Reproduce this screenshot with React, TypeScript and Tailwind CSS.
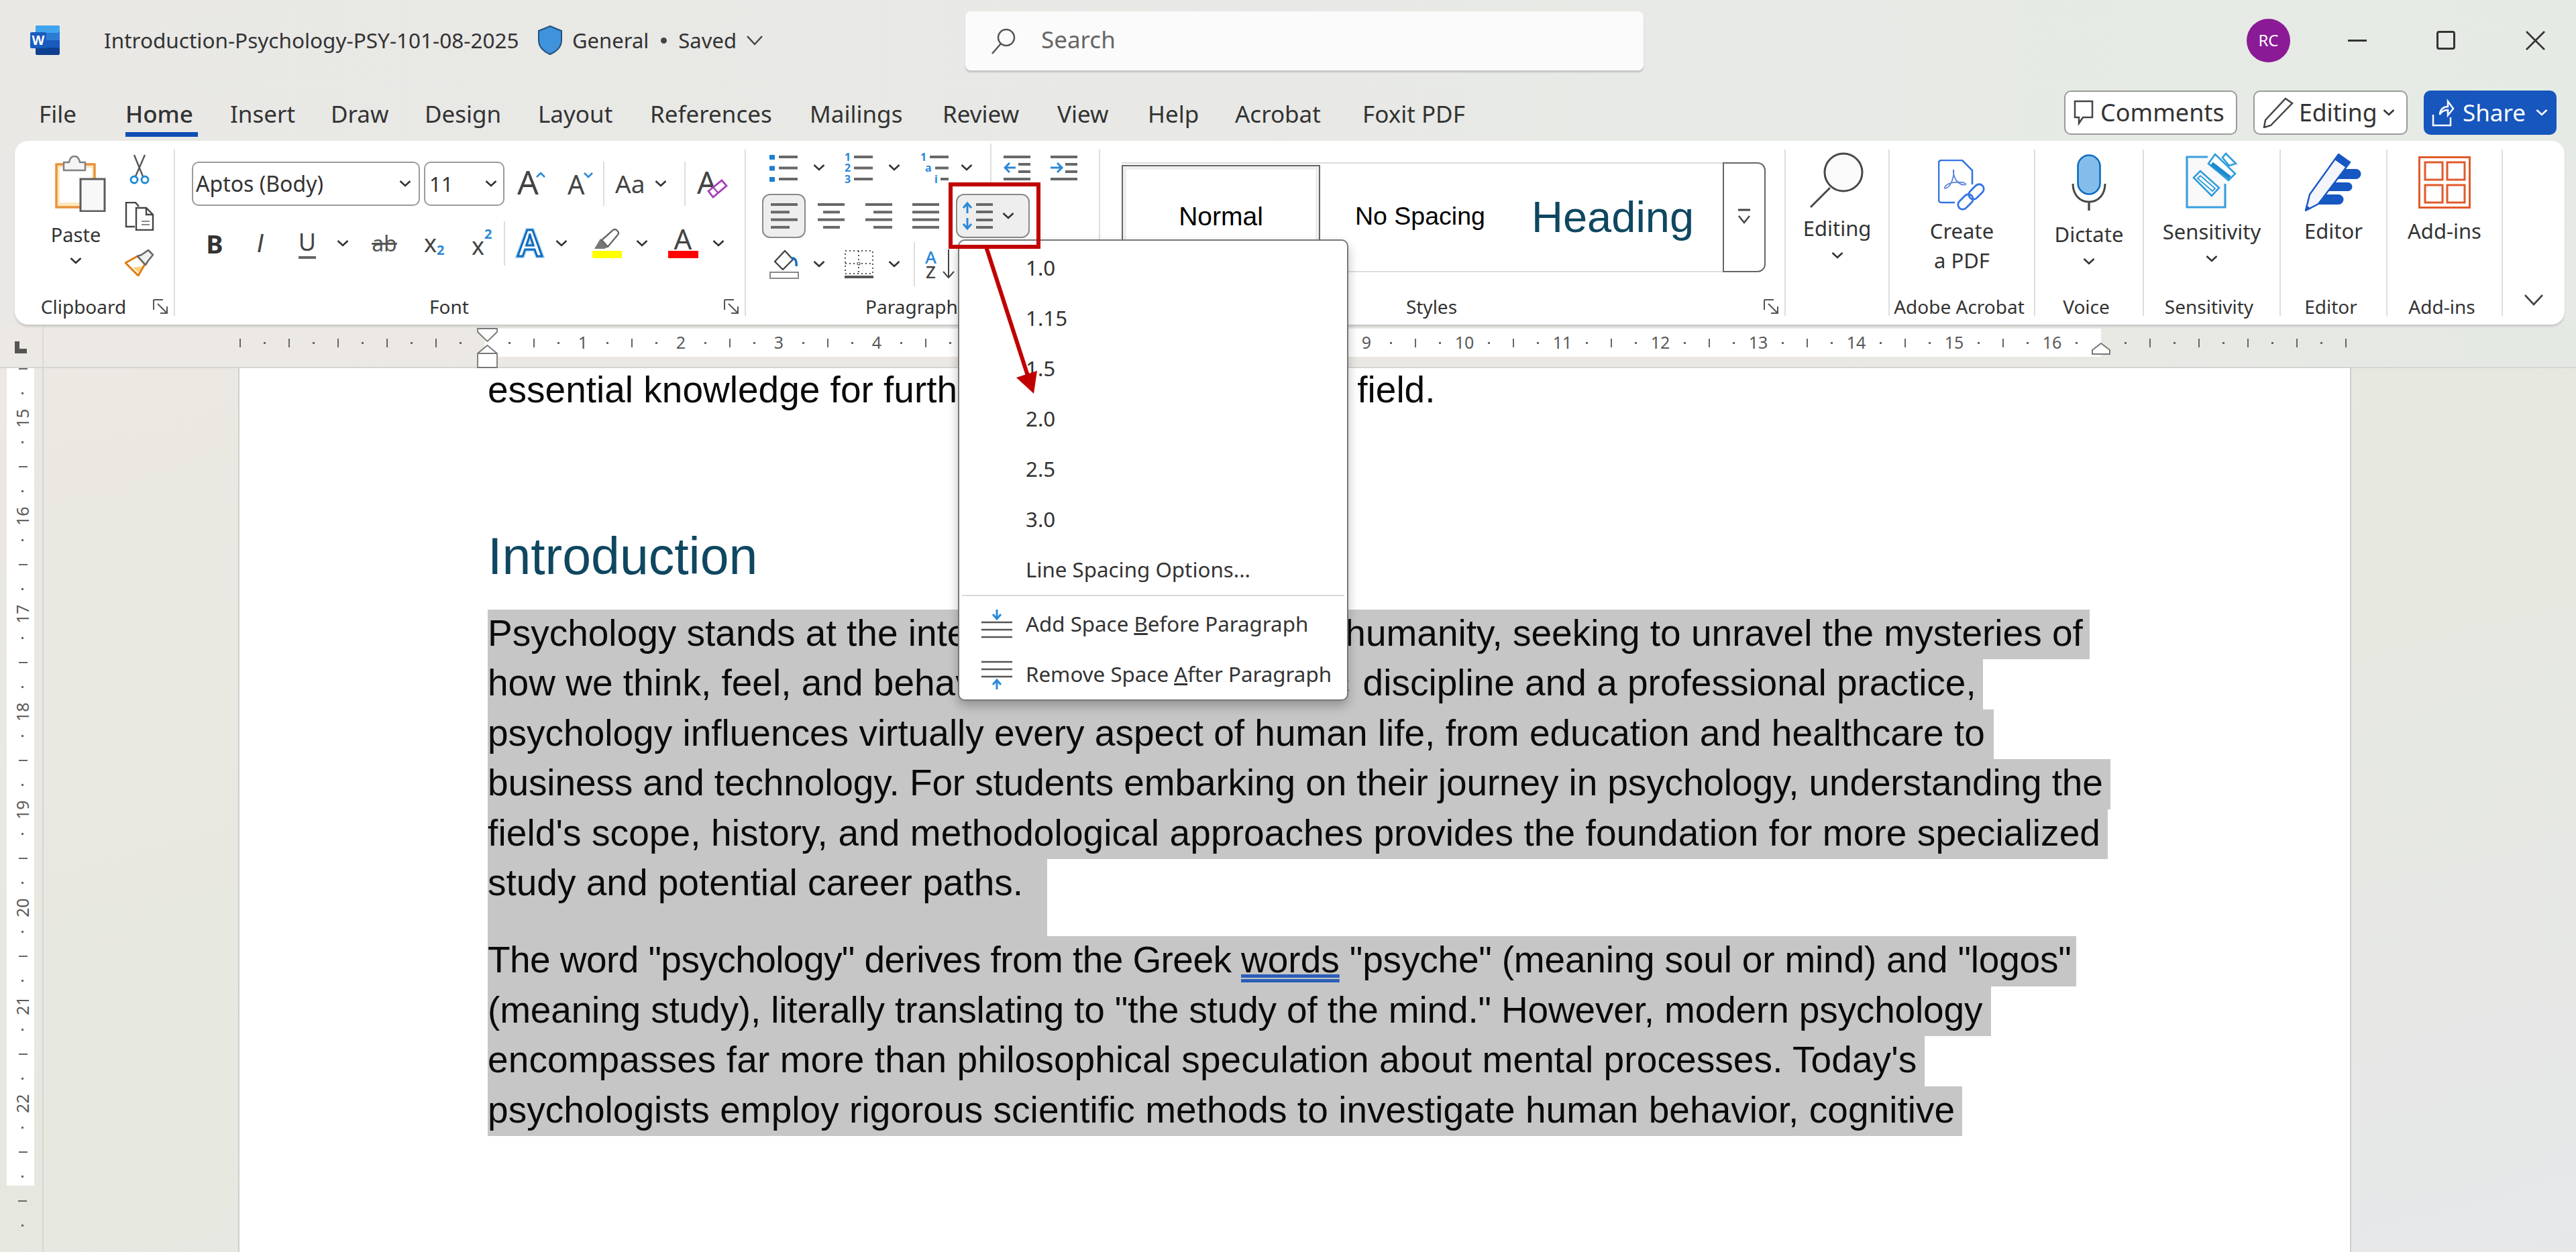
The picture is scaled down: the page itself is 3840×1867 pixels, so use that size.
import type { ReactNode } from "react"

const ui = "font-['Noto_Sans','Open_Sans',sans-serif]"
const doc = "font-['Liberation_Sans',Arial,sans-serif]"

function Chev({ className = "" }: { className?: string }) {
  return (
    <svg viewBox="0 0 20 14" className={`w-[20px] h-[14px] shrink-0 ${className}`}>
      <path d="M2.5 3l7.5 7 7.5-7" fill="none" stroke="#333" strokeWidth="2.6" />
    </svg>
  )
}

function AlignIcon({ rows, className = "" }: { rows: [number, number][]; className?: string }) {
  return (
    <svg viewBox="0 0 42 46" className={`w-[42px] h-[46px] shrink-0 ${className}`}>
      {rows.map(([x, w], i) => (
        <rect key={i} x={x} y={4 + i * 11.3} width={w} height="4" fill="#686868" />
      ))}
    </svg>
  )
}

function WordIcon() {
  return (
    <svg viewBox="0 0 44 44" className="w-[44px] h-[44px] shrink-0 overflow-visible">
      <rect x="8" y="0" width="36" height="44" rx="3" fill="#185abd" />
      <rect x="8" y="0" width="36" height="11" rx="3" fill="#41a5ee" />
      <rect x="8" y="11" width="36" height="11" fill="#2b7cd3" />
      <rect x="8" y="33" width="36" height="11" rx="3" fill="#103f91" />
      <rect x="0" y="10" width="24" height="24" rx="2" fill="#1a5cbe" />
      <text x="12" y="29" textAnchor="middle" fontSize="20" fontWeight="700" fill="#fff" fontFamily="Liberation Sans">W</text>
    </svg>
  )
}

function Shield() {
  return (
    <svg viewBox="0 0 40 44" className="w-[40px] h-[44px] shrink-0">
      <path d="M20 1l17 7v14c0 10-8 17-17 21C11 39 3 32 3 22V8z" fill="#3f92dc" stroke="#24507c" strokeWidth="2" />
    </svg>
  )
}

function SearchGlyph() {
  return (
    <svg viewBox="0 0 40 40" className="w-[40px] h-[40px] shrink-0">
      <circle cx="25" cy="15" r="12" fill="none" stroke="#555" strokeWidth="2.5" />
      <path d="M17 24L4 39" stroke="#555" strokeWidth="2.5" />
    </svg>
  )
}

function PasteIcon() {
  return (
    <svg viewBox="0 0 76 84" className="w-[76px] h-[84px]">
      <rect x="2" y="13" width="57" height="64" fill="#fde8bd" stroke="#e9923a" strokeWidth="3.5" />
      <rect x="7" y="18" width="48" height="52" fill="#fff" />
      <path d="M13 10h8c1-6 4-9 8-9s7 3 8 9h8v12H13z" fill="#f5f5f5" stroke="#808080" strokeWidth="2.5" strokeLinejoin="round" />
      <rect x="38" y="35" width="36" height="48" fill="#f8f8f8" stroke="#5c5c5c" strokeWidth="3" />
    </svg>
  )
}

function ScissorsIcon() {
  return (
    <svg viewBox="0 0 31 45" className="w-[31px] h-[45px]">
      <path d="M7 1l13 32M23 1L9 33" stroke="#555" strokeWidth="2.4" fill="none" />
      <circle cx="7" cy="38" r="5" fill="#fff" stroke="#1b8ad6" strokeWidth="2.8" />
      <circle cx="23" cy="38" r="5" fill="#fff" stroke="#1b8ad6" strokeWidth="2.8" />
    </svg>
  )
}

function CopyIcon() {
  return (
    <svg viewBox="0 0 44 43" className="w-[44px] h-[43px]">
      <path d="M15 37H2V1h14l5 6" fill="none" stroke="#444" strokeWidth="2.4" />
      <path d="M17 9h15l10 10v23H17z" fill="#fff" stroke="#444" strokeWidth="2.4" />
      <path d="M32 9v10h10" fill="none" stroke="#444" strokeWidth="2.4" />
      <path d="M25 29h12M25 34h12" stroke="#888" strokeWidth="2" />
    </svg>
  )
}

function PainterIcon() {
  return (
    <svg viewBox="0 0 44 40" className="w-[44px] h-[40px]">
      <path d="M1 20l19 19 10-17-11-12z" fill="#fff" stroke="#e07b10" strokeWidth="3" strokeLinejoin="round" />
      <path d="M12 27l9 8 5-10z" fill="#fad27a" />
      <path d="M19 10l6-2 10-7 7 7-8 10-3 5z" fill="#f0f0f0" stroke="#666" strokeWidth="2.5" strokeLinejoin="round" />
    </svg>
  )
}

function GrowIcon() {
  return (
    <svg viewBox="0 0 45 44" className="w-[45px] h-[44px] shrink-0 overflow-visible">
      <text x="1" y="38" fontSize="50" fill="#444" fontFamily="Noto Sans">A</text>
      <path d="M30 12l6-6 6 6" fill="none" stroke="#2b88d8" strokeWidth="2.6" />
    </svg>
  )
}

function ShrinkIcon() {
  return (
    <svg viewBox="0 0 40 44" className="w-[40px] h-[44px] shrink-0 overflow-visible">
      <text x="1" y="38" fontSize="40" fill="#444" fontFamily="Noto Sans">A</text>
      <path d="M26 6l6 6 6-6" fill="none" stroke="#2b88d8" strokeWidth="2.6" />
    </svg>
  )
}

function ClearIcon() {
  return (
    <svg viewBox="0 0 44 46" className="w-[44px] h-[46px] shrink-0 overflow-visible">
      <text x="0" y="38" fontSize="46" fill="#444" fontFamily="Noto Sans">A</text>
      <path d="M17 34l20-16 7 8-20 17z" fill="#fff" stroke="#a43eb8" strokeWidth="2.8" />
      <path d="M24 28l7 8" stroke="#a43eb8" strokeWidth="2.4" />
    </svg>
  )
}

function ListIcon({ kind }: { kind: "bullet" | "number" | "multi" }) {
  const marks = kind === "number" ? ["1", "2", "3"] : ["1", "a", "i"]
  return (
    <svg viewBox="0 0 43 46" className="w-[43px] h-[46px] shrink-0 overflow-visible">
      {[0, 1, 2].map((i) =>
        kind === "bullet" ? (
          <rect key={i} x="0" y={4 + i * 16.5} width="8" height="7" fill="#1b7fd0" />
        ) : (
          <text key={i} x={kind === "multi" ? [0, 7, 21][i] : 0} y={12.5 + i * 16.5} fontSize="16" fontWeight="700" fill="#2b88d8" fontFamily="Noto Sans">
            {marks[i]}
          </text>
        )
      )}
      {[0, 1, 2].map((i) => {
        const x = kind === "multi" ? [14, 22, 30][i] : 14
        return <rect key={i} x={x} y={5 + i * 16.5} width={kind === "multi" ? 42 - x : 28} height="4" fill="#686868" />
      })}
    </svg>
  )
}

function IndentIcon({ grow }: { grow: boolean }) {
  return (
    <svg viewBox="0 0 40 46" className="w-[40px] h-[46px] shrink-0">
      <rect x="0" y="5" width="40" height="4" fill="#686868" />
      <rect x="22" y="16" width="18" height="4" fill="#686868" />
      <rect x="22" y="27" width="18" height="4" fill="#686868" />
      <rect x="0" y="38" width="40" height="4" fill="#686868" />
      <path d={grow ? "M0 23h16M10 16l7 7-7 7" : "M18 23H2M9 16l-7 7 7 7"} fill="none" stroke="#2b88d8" strokeWidth="3" />
    </svg>
  )
}

function LineSpacingIcon() {
  return (
    <svg viewBox="0 0 48 46" className="w-[48px] h-[46px] shrink-0">
      <path d="M7 19V5M1 11l6-7 6 7M7 26v15M1 35l6 7 6-7" fill="none" stroke="#2b88d8" strokeWidth="3" />
      <rect x="20" y="4" width="25" height="4" fill="#686868" />
      <rect x="20" y="15" width="25" height="4" fill="#686868" />
      <rect x="20" y="27" width="25" height="4" fill="#686868" />
      <rect x="20" y="38" width="25" height="4" fill="#686868" />
    </svg>
  )
}

function ShadingIcon() {
  return (
    <svg viewBox="0 0 44 44" className="w-[44px] h-[44px] shrink-0">
      <path d="M8 18L23 2l12 13-15 15z" fill="#fff" stroke="#444" strokeWidth="2.4" strokeLinejoin="round" />
      <path d="M33 14c4-3 8 2 7 11" fill="none" stroke="#1b6fc2" strokeWidth="3.5" />
      <rect x="1" y="34" width="42" height="9" fill="#fff" stroke="#888" strokeWidth="2" />
    </svg>
  )
}

function BordersIcon() {
  return (
    <svg viewBox="0 0 43 43" className="w-[43px] h-[43px] shrink-0">
      <path d="M1 1h41v34H1zM1 20h41M21 1v34" fill="none" stroke="#555" strokeWidth="2" strokeDasharray="2 4" />
      <circle cx="21" cy="20" r="2" fill="#fff" stroke="#555" strokeWidth="1.2" />
      <rect x="0" y="38" width="43" height="4" fill="#555" />
    </svg>
  )
}

function SortIcon() {
  return (
    <div className="flex items-center w-[47px] shrink-0">
      <div className={`${ui} flex flex-col items-center leading-[22px] text-[26px]`}>
        <span className="text-[#2b88d8] font-medium">A</span>
        <span className="text-[#444] font-medium">Z</span>
      </div>
      <svg viewBox="0 0 20 44" className="ml-[8px] w-[20px] h-[44px]">
        <path d="M10 0v42M2 33l8 9 8-9" fill="none" stroke="#444" strokeWidth="2" />
      </svg>
    </div>
  )
}

function HighlightIcon() {
  return (
    <svg viewBox="0 0 44 44" className="w-[44px] h-[44px] shrink-0">
      <path d="M3 30l9-15 12 12-6 3z" fill="#777" />
      <path d="M14 17L31 2a3.5 3.5 0 015 0l2 2a3.5 3.5 0 010 5L23 27z" fill="#fff" stroke="#666" strokeWidth="2.4" />
      <rect x="0" y="33" width="44" height="11" fill="#ffff00" />
    </svg>
  )
}

function FontColorIcon() {
  return (
    <svg viewBox="0 0 45 44" className="w-[45px] h-[44px] shrink-0 overflow-visible">
      <text x="22" y="31" textAnchor="middle" fontSize="42" fill="#444" fontFamily="Noto Sans">A</text>
      <rect x="0" y="33" width="45" height="11" fill="#ff0000" />
    </svg>
  )
}

function TextEffectsIcon() {
  return (
    <svg viewBox="0 0 44 44" className="w-[44px] h-[44px] shrink-0 overflow-visible">
      <text x="22" y="41" textAnchor="middle" fontSize="54" fontWeight="600" fill="none" stroke="#a9d2f2" strokeWidth="6" fontFamily="Noto Sans">A</text>
      <text x="22" y="41" textAnchor="middle" fontSize="54" fontWeight="600" fill="#fff" stroke="#0f6cbd" strokeWidth="3" fontFamily="Noto Sans">A</text>
    </svg>
  )
}

function Launcher() {
  return (
    <svg viewBox="0 0 24 24" className="w-[24px] h-[24px] shrink-0">
      <path d="M2 2h14M2 2v15" stroke="#555" strokeWidth="2" fill="none" />
      <path d="M8 8l14 14M22 12v10H12" stroke="#555" strokeWidth="2" fill="none" />
    </svg>
  )
}

function MagnifierIcon() {
  return (
    <svg viewBox="0 0 85 85" className="w-[85px] h-[85px]">
      <circle cx="52" cy="31" r="28" fill="#fafafa" stroke="#484848" strokeWidth="3" />
      <path d="M32 54L3 83" stroke="#484848" strokeWidth="3" />
    </svg>
  )
}

function PdfIcon() {
  return (
    <svg viewBox="0 0 72 78" className="w-[72px] h-[78px]">
      <path d="M25 64H5a4 4 0 01-4-4V5a4 4 0 014-4h31l15 15v21" fill="#fff" stroke="#3574e2" strokeWidth="2.6" />
      <path d="M23 15c2 10-4 26-12 28-3 0 0-6 8-8 8-2 20-2 22 1 1 3-8 2-12-3-4-4-7-12-6-18z" fill="none" stroke="#5a84d8" strokeWidth="1.8" />
      <rect x="28" y="56" width="26" height="14" rx="7" transform="rotate(-45 41 63)" fill="#fff" stroke="#3574e2" strokeWidth="2.8" />
      <rect x="44" y="41" width="26" height="14" rx="7" transform="rotate(-45 57 48)" fill="none" stroke="#3574e2" strokeWidth="2.8" />
    </svg>
  )
}

function MicIcon() {
  return (
    <svg viewBox="0 0 52 84" className="w-[52px] h-[84px]">
      <path d="M2 44c0 16 10 27 24 27s24-11 24-27" fill="none" stroke="#484848" strokeWidth="3" />
      <path d="M26 71v13" stroke="#484848" strokeWidth="3.4" />
      <rect x="9.5" y="1.5" width="33" height="58" rx="16.5" fill="#84bdec" stroke="#0f6cbd" strokeWidth="2.6" />
    </svg>
  )
}

function SensitivityIcon() {
  return (
    <svg viewBox="0 0 78 84" className="w-[78px] h-[84px]">
      <path d="M33 7H2v75h57V47" fill="#f9f9f9" stroke="#3ba0de" strokeWidth="3.2" />
      <path d="M12 38l10-10 28 25-11 12z" fill="#fff" stroke="#2f9cdc" strokeWidth="2.6" />
      <path d="M18 39l4-4 22 19-4 4z" fill="none" stroke="#2f9cdc" strokeWidth="2" />
      <path d="M60 2l15 15-10 3-10-12z" fill="#fff" stroke="#2f9cdc" strokeWidth="2.6" />
      <path d="M44 3l30 29-10 10-30-25z" fill="#fff" stroke="#2f9cdc" strokeWidth="2.6" />
      <path d="M39 17l27 21" stroke="#1f8ad0" strokeWidth="6" />
    </svg>
  )
}

function EditorIcon() {
  return (
    <svg viewBox="0 0 86 86" className="w-[86px] h-[86px]">
      <path d="M50 23H76a7.5 7.5 0 010 15H40zM35 43H64a6.5 6.5 0 010 13H26zM22 61H50a7.5 7.5 0 010 15H10z" fill="#1657c2" />
      <path d="M1 85l6-24L50 1l17 12-47 62z" fill="#f4f5fb" stroke="#1657c2" strokeWidth="2.4" />
      <path d="M50 1l17 12-6 8-17-12z" fill="#1657c2" />
      <path d="M0 86l2-9 7 5z" fill="#1657c2" />
    </svg>
  )
}

function AddinsIcon() {
  return (
    <svg viewBox="0 0 78 78" className="w-[78px] h-[78px]">
      <rect x="1.5" y="1.5" width="75" height="75" fill="#fff" stroke="#e05a2b" strokeWidth="3" />
      {[10, 43].map((x) =>
        [9, 43].map((y) => <rect key={`${x}${y}`} x={x} y={y} width="26" height="26" fill="#fff" stroke="#e05a2b" strokeWidth="3" />)
      )}
    </svg>
  )
}

function Sep({ className = "" }: { className?: string }) {
  return <div className={`w-[2px] shrink-0 bg-[#dedede] ${className}`} />
}

function GroupLabel({ label, launcher = true }: { label: string; launcher?: boolean }) {
  return (
    <div className="h-[54px] mt-auto flex items-center pr-[8px]">
      <span className={`${ui} flex-1 text-center text-[28px] text-[#333] whitespace-nowrap`}>{label}</span>
      {launcher && <Launcher />}
    </div>
  )
}

function BigButton({ icon, label, pt, mt, chevMt }: { icon: ReactNode; label: ReactNode; pt: string; mt: string; chevMt?: string }) {
  return (
    <div className={`w-full shrink-0 flex flex-col items-center ${pt}`}>
      {icon}
      <div className={`${ui} ${mt} text-[31px] leading-[44px] text-center text-[#333]`}>{label}</div>
      {chevMt && <Chev className={chevMt} />}
    </div>
  )
}

const tabs = [
  { name: "File", cls: "w-[129px] border-transparent" },
  { name: "Home", cls: "w-[108px] mr-[48px] border-[#0f4eb3] font-medium" },
  { name: "Insert", cls: "w-[150px] border-transparent" },
  { name: "Draw", cls: "w-[140px] border-transparent" },
  { name: "Design", cls: "w-[169px] border-transparent" },
  { name: "Layout", cls: "w-[167px] border-transparent" },
  { name: "References", cls: "w-[238px] border-transparent" },
  { name: "Mailings", cls: "w-[198px] border-transparent" },
  { name: "Review", cls: "w-[171px] border-transparent" },
  { name: "View", cls: "w-[135px] border-transparent" },
  { name: "Help", cls: "w-[130px] border-transparent" },
  { name: "Acrobat", cls: "w-[190px] border-transparent" },
  { name: "Foxit PDF", cls: "w-[170px] border-transparent" },
]

const menuItems = ["1.0", "1.15", "1.5", "2.0", "2.5", "3.0", "Line Spacing Options..."]

const para = [
  { k: "a", w: "w-[2388px]", t: <>Psychology stands at the inte<span className="tracking-[-0.65px]">rsection of science and</span> humanity, seeking to unravel the mysteries of</> },
  { k: "b", w: "w-[2229px]", t: <>how we think, feel, and behave. As both <span className="tracking-[4px]">a scientific</span> discipline and a professional practice,</> },
  { k: "c", w: "w-[2245px]", t: <>psychology influences virtually every aspect of human life, from education and healthcare to</> },
  { k: "d", w: "w-[2419px] tracking-[-0.12px]", t: <>business and technology. For students embarking on their journey in psychology, understanding the</> },
  { k: "e", w: "w-[2415px] tracking-[0.1px]", t: <>field's scope, history, and methodological approaches provides the foundation for more specialized</> },
  { k: "f", w: "w-[834px] h-[115px]", t: <>study and potential career paths.</> },
  { k: "g", w: "w-[2368px]", t: <><span className="tracking-[-0.57px]">The word "psychology" derives from the Greek </span><span className="underline decoration-double decoration-[#2b5fb8]">words</span><span className="tracking-[-0.19px]"> "psyche" (meaning soul or mind) and "logos"</span></> },
  { k: "h", w: "w-[2241px] tracking-[-0.16px]", t: <>(meaning study), literally translating to "the study of the mind." However, modern psychology</> },
  { k: "i", w: "w-[2142px] tracking-[0.1px]", t: <>encompasses far more than philosophical speculation about mental processes. Today's</> },
  { k: "j", w: "w-[2198px] tracking-[0.05px]", t: <>psychologists employ rigorous scientific methods to investigate human behavior, cognitive</> },
]

const docText = `${doc} leading-[71px] text-[55px] text-[#0a0a0a] whitespace-nowrap`

function hTick(k: number) {
  if (k > 0 && k <= 64 && k % 4 === 0) {
    return <span className={`${ui} text-[25px] text-[#5a5a5a]`}>{k / 4}</span>
  }
  if (k % 2 === 0) return <span className="w-[2px] h-[13px] bg-[#666]" />
  return <span className="w-[3px] h-[3px] bg-[#666]" />
}

function HTicks({ from, to }: { from: number; to: number }) {
  const items = []
  for (let k = from; k <= to; k++) {
    items.push(
      <div key={k} className="w-[36.5px] shrink-0 flex items-center justify-center">
        {hTick(k)}
      </div>
    )
  }
  return <>{items}</>
}

function VRuler() {
  const nums = [15, 16, 17, 18, 19, 20, 21, 22, 23]
  const line = <span className="w-[13px] h-[2px] bg-[#666]" />
  const dot = <span className="w-[3px] h-[3px] bg-[#666]" />
  return (
    <div className="w-[65px] shrink-0 relative overflow-hidden border-r-2 border-[#d6d6d6] pl-[10px]">
      <div className="w-[41px] h-[1219px] bg-white" />
      <div className="absolute left-[10px] top-[-17px] w-[41px] flex flex-col items-center">
        {nums.map((n) => (
          <div key={n} className="h-[146px] w-full flex flex-col items-center">
            <div className="h-[36.5px] flex items-center pl-[7px]">{line}</div>
            <div className="h-[36.5px] flex items-center pl-[5px]">{dot}</div>
            <div className="h-[36.5px] flex items-center pl-[5px]">
              {n < 23 ? <span className={`${ui} -rotate-90 text-[25px] text-[#5a5a5a]`}>{n}</span> : line}
            </div>
            <div className="h-[36.5px] flex items-center pl-[5px]">{dot}</div>
          </div>
        ))}
      </div>
    </div>
  )
}

export default function App() {
  return (
    <div className="relative w-[3840px] h-[1867px] overflow-hidden flex flex-col bg-[linear-gradient(90deg,#e9e8e5_0%,#e8e9e6_50%,#e5ebe4_100%)]">
      {/* title bar */}
      <div className="h-[120px] shrink-0 flex items-center">
        <div className="ml-[45px]"><WordIcon /></div>
        <span className={`${ui} ml-[66px] w-[645px] text-[31.5px] text-[#333] whitespace-nowrap`}>Introduction-Psychology-PSY-101-08-2025</span>
        <Shield />
        <span className={`${ui} ml-[13px] text-[31px] text-[#333]`}>General</span>
        <span className="ml-[18px] w-[9px] h-[9px] rounded-full bg-[#444]" />
        <span className={`${ui} ml-[17px] text-[31px] text-[#333]`}>Saved</span>
        <svg viewBox="0 0 26 16" className="ml-[14px] w-[26px] h-[16px]"><path d="M2 2l11 12L24 2" fill="none" stroke="#444" strokeWidth="2.5" /></svg>
        <div className="absolute left-[1439px] top-[17px] w-[1011px] h-[88px] rounded-[8px] bg-[#fbfbfb] shadow-[0_3px_2px_#c4c4c4] flex items-center pl-[36px]">
          <SearchGlyph />
          <span className={`${ui} ml-[37px] mb-[4px] text-[35px] text-[#666]`}>Search</span>
        </div>
        <div className="ml-auto flex items-center mr-[46px]">
          <div className={`${ui} w-[65px] h-[65px] rounded-full bg-[#8a1a96] text-white text-[24px] flex items-center justify-center`}>RC</div>
          <span className="ml-[86px] w-[28px] h-[3px] bg-[#333]" />
          <span className="ml-[104px] w-[28px] h-[28px] rounded-[4px] border-[3px] border-[#333]" />
          <svg viewBox="0 0 29 29" className="ml-[105px] w-[29px] h-[29px]"><path d="M1 1l27 27M28 1L1 28" stroke="#333" strokeWidth="2.6" /></svg>
        </div>
      </div>

      {/* tabs */}
      <div className="h-[90px] shrink-0 flex items-start">
        <div className="ml-[58px] mt-[18px] flex items-start">
          {tabs.map((t) => (
            <div key={t.name} className={`${ui} h-[66px] pt-[5px] flex items-center justify-start border-b-[7px] text-[35px] text-[#333] whitespace-nowrap ${t.cls}`}>
              {t.name}
            </div>
          ))}
        </div>
        <div className="ml-auto mr-[29px] mt-[15px] flex items-center gap-[24px]">
          <div className={`${ui} w-[258px] h-[66px] rounded-[10px] border-2 border-[#9a9a9a] bg-white flex items-center pl-[12px] text-[36px] text-[#333]`}>
            <svg viewBox="0 0 30 38" className="w-[30px] h-[38px]"><path d="M2 2h26v24H14l-6 9v-9H2z" fill="none" stroke="#444" strokeWidth="2.5" /></svg>
            <span className="ml-[10px]">Comments</span>
          </div>
          <div className={`${ui} w-[230px] h-[66px] rounded-[10px] border-2 border-[#9a9a9a] bg-white flex items-center pl-[12px] text-[35.5px] text-[#333]`}>
            <svg viewBox="0 0 46 46" className="w-[46px] h-[46px]"><path d="M34 2l10 7L12 42 2 45l2-11z" fill="none" stroke="#444" strokeWidth="2.5" /></svg>
            <span className="ml-[8px]">Editing</span>
            <Chev className="ml-[8px]" />
          </div>
          <div className={`${ui} w-[198px] h-[66px] rounded-[10px] bg-[#1656bd] flex items-center pl-[12px] text-[35px] text-white`}>
            <svg viewBox="0 0 34 42" className="w-[34px] h-[42px]"><path d="M2 24v16h26V28M12 24c0-8 6-12 12-12V4l8 11-8 10v-8c-6 0-10 3-12 7z" fill="none" stroke="#fff" strokeWidth="2.5" /></svg>
            <span className="ml-[12px]">Share</span>
            <svg viewBox="0 0 20 14" className="ml-[14px] w-[20px] h-[14px]"><path d="M2.5 3l7.5 7 7.5-7" fill="none" stroke="#fff" strokeWidth="2.6" /></svg>
          </div>
        </div>
      </div>

      {/* ribbon */}
      <div className="ml-[22px] w-[3801px] h-[274px] shrink-0 rounded-[20px] bg-white shadow-[0_3px_3px_#c9c9c9] flex relative z-10">
        {/* clipboard */}
        <div className="w-[237px] shrink-0 flex flex-col pt-[22px]">
          <div className="flex">
            <div className="ml-[60px] w-[76px] flex flex-col items-center">
              <PasteIcon />
              <span className={`${ui} mt-[14px] mr-[14px] text-[29px] leading-[40px] text-[#333]`}>Paste</span>
              <Chev className="mt-[12px] mr-[14px]" />
            </div>
            <div className="ml-[28px] -mt-[2px] w-[44px] flex flex-col items-center">
              <ScissorsIcon />
              <div className="mt-[26px]"><CopyIcon /></div>
              <div className="mt-[28px]"><PainterIcon /></div>
            </div>
          </div>
          <GroupLabel label="Clipboard" />
        </div>
        <Sep className="my-[13px]" />

        {/* font */}
        <div className="w-[849px] shrink-0 flex flex-col pt-[31px]">
          <div className="flex items-center h-[66px]">
            <div className={`${ui} ml-[25px] w-[340px] h-[66px] rounded-[10px] border-2 border-[#9b9b9b] flex items-center justify-between pl-[4px] pr-[10px] text-[32px] text-[#333]`}>
              Aptos (Body)<Chev />
            </div>
            <div className={`${ui} ml-[6px] w-[120px] h-[66px] rounded-[10px] border-2 border-[#9b9b9b] flex items-center justify-between pl-[6px] pr-[8px] text-[31px] text-[#333]`}>
              11<Chev />
            </div>
            <div className="ml-[18px]"><GrowIcon /></div>
            <div className="ml-[30px]"><ShrinkIcon /></div>
            <Sep className="ml-[14px] h-[66px]" />
            <span className={`${ui} ml-[16px] w-[54px] text-[37px] text-[#444]`}>Aa</span>
            <Chev className="ml-[4px]" />
            <Sep className="ml-[25px] h-[66px]" />
            <div className="ml-[17px]"><ClearIcon /></div>
          </div>
          <div className="flex items-center h-[66px] mt-[23px]">
            <span className={`${ui} ml-[39px] w-[40px] text-center text-[38px] font-bold text-[#333]`}>B</span>
            <span className={`${doc} ml-[28px] w-[40px] text-center text-[38px] italic text-[#444]`}>I</span>
            <div className="ml-[30px] w-[40px] flex flex-col items-center">
              <span className={`${ui} text-[36px] leading-[42px] text-[#444]`}>U</span>
              <span className="w-[26px] h-[4px] bg-[#666]" />
            </div>
            <Chev className="ml-[23px]" />
            <span className={`${ui} ml-[30px] w-[44px] text-center text-[32px] text-[#555] line-through`}>ab</span>
            <div className="ml-[37px] w-[43px] flex items-end">
              <span className={`${ui} text-[36px] leading-[42px] text-[#444]`}>x</span>
              <span className={`${ui} text-[20px] leading-[22px] font-bold text-[#2b88d8]`}>2</span>
            </div>
            <div className="ml-[28px] w-[34px] flex items-start">
              <span className={`${ui} text-[36px] leading-[42px] text-[#444] mt-[8px]`}>x</span>
              <span className={`${ui} text-[20px] leading-[22px] font-bold text-[#2b88d8]`}>2</span>
            </div>
            <Sep className="ml-[14px] h-[66px]" />
            <div className="ml-[15px]"><TextEffectsIcon /></div>
            <Chev className="ml-[15px]" />
            <div className="ml-[36px]"><HighlightIcon /></div>
            <Chev className="ml-[20px]" />
            <div className="ml-[29px]"><FontColorIcon /></div>
            <Chev className="ml-[20px]" />
          </div>
          <GroupLabel label="Font" />
        </div>
        <Sep className="my-[13px]" />

        {/* paragraph */}
        <div className="w-[526px] shrink-0 flex flex-col pt-[4px]">
          <div className="h-[72px] flex items-center">
            <div className="ml-[35px]"><ListIcon kind="bullet" /></div>
            <Chev className="ml-[21px]" />
            <div className="ml-[28px]"><ListIcon kind="number" /></div>
            <Chev className="ml-[21px]" />
            <div className="ml-[29px]"><ListIcon kind="multi" /></div>
            <Chev className="ml-[16px]" />
            <Sep className="ml-[25px] h-[63px] -mt-[9px]" />
            <div className="ml-[18px]"><IndentIcon grow={false} /></div>
            <div className="ml-[30px]"><IndentIcon grow /></div>
          </div>
          <div className="h-[72px] flex items-center">
            <div className="ml-[24px] w-[65px] h-[66px] rounded-[12px] border-2 border-[#8a8a8a] bg-[#eeeeee] flex items-center justify-center">
              <AlignIcon rows={[[1, 40], [1, 28], [1, 40], [1, 28]]} />
            </div>
            <AlignIcon className="ml-[18px]" rows={[[0, 40], [8, 25], [0, 40], [8, 25]]} />
            <AlignIcon className="ml-[29px]" rows={[[0, 40], [12, 28], [0, 40], [12, 28]]} />
            <AlignIcon className="ml-[28px]" rows={[[0, 40], [0, 40], [0, 40], [0, 40]]} />
            <div className="ml-[23px] w-[110px] h-[66px] rounded-[12px] border-2 border-[#8a8a8a] bg-[#eeeeee] flex items-center pl-[8px]">
              <LineSpacingIcon />
              <Chev className="ml-[10px]" />
            </div>
          </div>
          <div className="h-[72px] flex items-center">
            <div className="ml-[35px]"><ShadingIcon /></div>
            <Chev className="ml-[20px]" />
            <div className="ml-[28px]"><BordersIcon /></div>
            <Chev className="ml-[21px]" />
            <Sep className="ml-[19px] h-[66px]" />
            <div className="ml-[15px]"><SortIcon /></div>
          </div>
          <GroupLabel label="Paragraph" />
        </div>
        <Sep className="my-[13px]" />

        {/* styles */}
        <div className="w-[1020px] shrink-0 flex flex-col pt-[32px]">
          <div className="flex h-[164px] ml-[32px]">
            <div className="w-[896px] flex border-y-2 border-[#dddddd]">
              <div className="w-[296px] shrink-0 mt-[2px] -mb-[2px] border-2 border-[#666] bg-white shadow-[inset_0_0_0_5px_#eeeeee] flex items-center justify-center">
                <span className={`${doc} mb-[6px] text-[39px] text-black`}>Normal</span>
              </div>
              <div className="w-[315px] shrink-0 flex items-center pl-[52px]">
                <span className={`${doc} mb-[3px] text-[37.5px] text-black whitespace-nowrap`}>No Spacing</span>
              </div>
              <div className="w-[262px] overflow-hidden flex items-center">
                <span className={`${doc} text-[65px] text-[#0f4761] whitespace-nowrap`}>Heading 1</span>
              </div>
            </div>
            <div className="w-[64px] rounded-r-[12px] border-2 border-[#666] flex items-center justify-center">
              <svg viewBox="0 0 24 28" className="w-[24px] h-[28px]"><path d="M3 3h18" stroke="#444" strokeWidth="3" /><path d="M4 12l8 10 8-10" fill="none" stroke="#444" strokeWidth="2.5" /></svg>
            </div>
          </div>
          <GroupLabel label="Styles" />
        </div>
        <Sep className="my-[13px]" />

        <div className="w-[153px] shrink-0 flex flex-col items-stretch">
          <BigButton pt="pt-[16px]" mt="mt-[7px]" chevMt="mt-[12px]" icon={<MagnifierIcon />} label="Editing" />
        </div>
        <Sep className="my-[13px]" />
        <div className="w-[215px] shrink-0 flex flex-col">
          <BigButton pt="pt-[28px]" mt="mt-[6px]" icon={<PdfIcon />} label={<>Create<br />a PDF</>} />
          <GroupLabel label="Adobe Acrobat" launcher={false} />
        </div>
        <Sep className="my-[13px]" />
        <div className="w-[160px] shrink-0 flex flex-col">
          <BigButton pt="pt-[20px]" mt="mt-[13px]" chevMt="mt-[12px]" icon={<MicIcon />} label="Dictate" />
          <GroupLabel label="Voice" launcher={false} />
        </div>
        <Sep className="my-[13px]" />
        <div className="w-[202px] shrink-0 flex flex-col">
          <BigButton pt="pt-[17px]" mt="mt-[12px]" chevMt="mt-[12px]" icon={<SensitivityIcon />} label="Sensitivity" />
          <GroupLabel label="Sensitivity" launcher={false} />
        </div>
        <Sep className="my-[13px]" />
        <div className="w-[157px] shrink-0 flex flex-col">
          <BigButton pt="pt-[19px]" mt="mt-[7px]" icon={<EditorIcon />} label="Editor" />
          <GroupLabel label="Editor" launcher={false} />
        </div>
        <Sep className="my-[13px]" />
        <div className="w-[170px] shrink-0 flex flex-col">
          <BigButton pt="pt-[23px]" mt="mt-[11px]" icon={<AddinsIcon />} label="Add-ins" />
          <GroupLabel label="Add-ins" launcher={false} />
        </div>
        <Sep className="my-[13px]" />
        <div className="flex-1 flex items-end justify-center pb-[28px]">
          <svg viewBox="0 0 30 18" className="w-[30px] h-[18px]"><path d="M2 2l13 14L28 2" fill="none" stroke="#444" strokeWidth="2.6" /></svg>
        </div>
      </div>

      {/* horizontal ruler */}
      <div className="h-[65px] shrink-0 flex border-b-2 border-[#d5d5d5] bg-[linear-gradient(90deg,#ece8e3_0%,#ebe8e4_70%,#e4e9e3_100%)] relative">
        <div className="w-[65px] shrink-0 border-r-2 border-[#dadada] flex items-center pl-[22px] pt-[4px]">
          <svg viewBox="0 0 18 18" className="w-[18px] h-[18px]"><path d="M0 0h7v11h11v7H0z" fill="#555" /></svg>
        </div>
        <div className="w-[658px] shrink-0 h-[42px] mt-[6px] flex justify-end items-center pr-[18.25px]"><HTicks from={-10} to={-1} /></div>
        <div className="w-[2409px] shrink-0 h-[42px] mt-[6px] bg-white flex items-center pl-[18.25px]"><HTicks from={1} to={65} /></div>
        <div className="h-[42px] mt-[6px] flex items-center pl-[18.25px]"><HTicks from={67} to={76} /></div>
        <svg viewBox="0 0 31 60" className="absolute left-[711px] top-[5px] w-[31px] h-[60px]">
          <path d="M1 1h29v5L15.5 20 1 6zM15.5 26L30 38v21H1V38zM1 38h29" fill="#fff" stroke="#777" strokeWidth="1.8" />
        </svg>
        <svg viewBox="0 0 30 18" className="absolute left-[3117px] top-[26px] w-[30px] h-[20px]">
          <path d="M15 1l13 10v6H2v-6z" fill="#fff" stroke="#777" strokeWidth="2" />
        </svg>
      </div>

      {/* document */}
      <div className="flex-1 min-h-0 flex overflow-hidden bg-[linear-gradient(165deg,#ece8e3_0%,#e6e8df_50%,#e6e7e9_100%)]">
        <VRuler />
        <div className="ml-[290px] w-[3150px] shrink-0 bg-white border-x-2 border-[#cfcfcf] pl-[370px] overflow-hidden">
          <div className={`${docText} -mt-[3px] h-[74.5px]`}>essential knowledge for further exploration within the field.</div>
          <div className={`${doc} mt-[158px] h-[100px] leading-[100px] text-[77px] text-[#0f4761]`}>Introduction</div>
          <div className="mt-[30px]">
            {para.map((l) => (
              <div key={l.k} className={`${docText} h-[74.5px] bg-[#c6c6c6] ${l.w}`}>{l.t}</div>
            ))}
          </div>
        </div>
      </div>

      {/* line spacing dropdown */}
      <div className="absolute z-20 left-[1428px] top-[357px] w-[582px] h-[688px] rounded-[10px] border-2 border-[#777] bg-white shadow-[0_8px_16px_rgba(0,0,0,0.25)] pt-[3px]">
        {menuItems.map((m) => (
          <div key={m} className={`${ui} h-[75px] flex items-center pl-[99px] text-[31.3px] text-[#333]`}>{m}</div>
        ))}
        <div className="mx-[4px] h-[2px] bg-[#d9d9d9]" />
        <div className={`${ui} h-[75px] mt-[4px] flex items-center text-[31.3px] text-[#333]`}>
          <svg viewBox="0 0 46 46" className="ml-[33px] w-[46px] h-[46px]">
            <path d="M23 1v13M17 8l6 7 6-7" fill="none" stroke="#2b88d8" strokeWidth="3" />
            <path d="M0 20h46M0 31h46M0 42h46" stroke="#555" strokeWidth="2.5" />
          </svg>
          <span className="ml-[20px]">Add Space <span className="underline">B</span>efore Paragraph</span>
        </div>
        <div className={`${ui} h-[75px] flex items-center text-[31.3px] text-[#333] whitespace-nowrap`}>
          <svg viewBox="0 0 46 46" className="ml-[33px] w-[46px] h-[46px]">
            <path d="M0 4h46M0 15h46M0 26h46" stroke="#555" strokeWidth="2.5" />
            <path d="M23 45V32M17 38l6-7 6 7" fill="none" stroke="#2b88d8" strokeWidth="3" />
          </svg>
          <span className="ml-[20px]">Remove Space <span className="underline">A</span>fter Paragraph</span>
        </div>
      </div>

      {/* annotation */}
      <div className="absolute z-30 left-[1414px] top-[272px] w-[137px] h-[99px] border-[6px] border-[#c00000]" />
      <svg viewBox="0 0 100 240" className="absolute z-30 left-[1450px] top-[360px] w-[100px] h-[240px]">
        <path d="M20 8L82 200" stroke="#c00000" strokeWidth="6" fill="none" />
        <path d="M91 227L65 203 96 193z" fill="#c00000" />
      </svg>
    </div>
  )
}
